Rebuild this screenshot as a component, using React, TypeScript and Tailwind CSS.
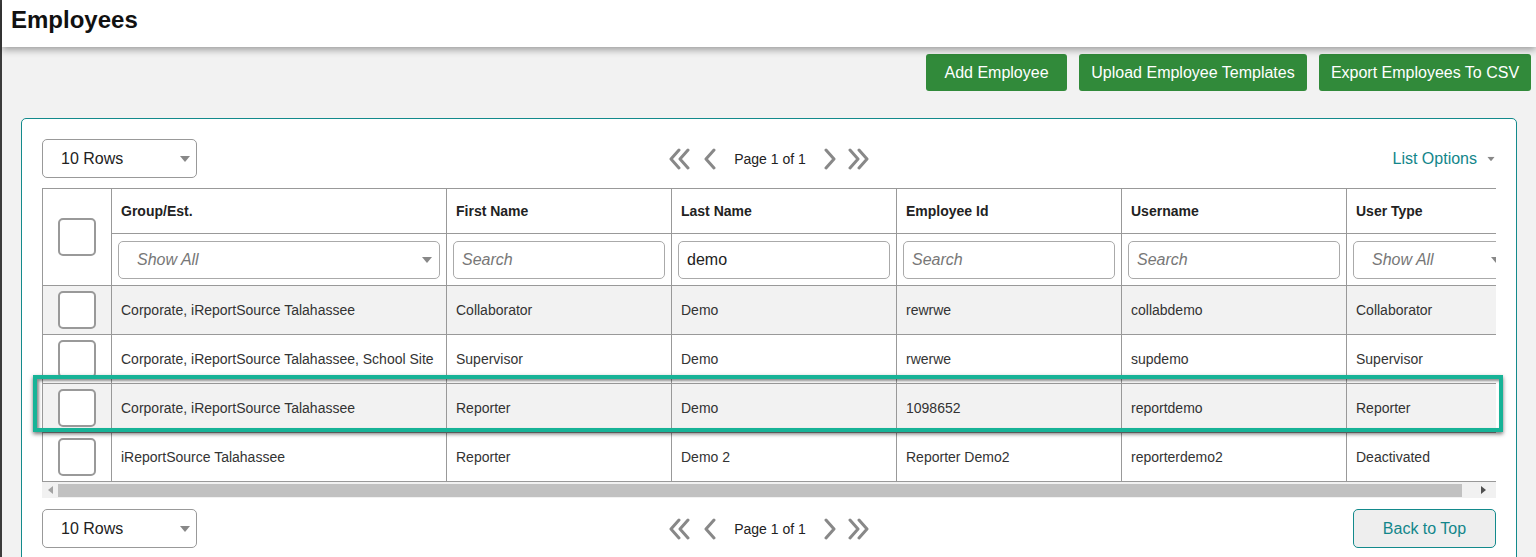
import type { ReactNode } from "react";

type Row = {
  group: string;
  first: string;
  last: string;
  empId: string;
  username: string;
  userType: string;
};

const ROWS: Row[] = [
  {
    group: "Corporate, iReportSource Talahassee",
    first: "Collaborator",
    last: "Demo",
    empId: "rewrwe",
    username: "collabdemo",
    userType: "Collaborator",
  },
  {
    group: "Corporate, iReportSource Talahassee, School Site",
    first: "Supervisor",
    last: "Demo",
    empId: "rwerwe",
    username: "supdemo",
    userType: "Supervisor",
  },
  {
    group: "Corporate, iReportSource Talahassee",
    first: "Reporter",
    last: "Demo",
    empId: "1098652",
    username: "reportdemo",
    userType: "Reporter",
  },
  {
    group: "iReportSource Talahassee",
    first: "Reporter",
    last: "Demo 2",
    empId: "Reporter Demo2",
    username: "reporterdemo2",
    userType: "Deactivated",
  },
];

const ACTIONS = [
  { label: "Add Employee", w: "w-[141px]" },
  { label: "Upload Employee Templates", w: "w-[228px]" },
  { label: "Export Employees To CSV", w: "w-[212px]" },
];

function Caret({ className = "" }: { className?: string }) {
  return (
    <svg width="10" height="6" viewBox="0 0 10 6" className={className}>
      <path d="M0 0h10L5 6z" fill="#888" />
    </svg>
  );
}

function Checkbox() {
  return (
    <div className="mx-auto h-[38px] w-[38px] rounded-[5px] border-2 border-[#999] bg-white" />
  );
}

function RowsSelect() {
  return (
    <div className="flex h-[39px] w-[155px] items-center justify-between rounded-[5px] border border-[#999] bg-white pl-[18px] pr-[6px] text-base text-[#222]">
      <span>10 Rows</span>
      <Caret />
    </div>
  );
}

function Chevron({ dir, double }: { dir: "left" | "right"; double?: boolean }) {
  const single = dir === "left" ? "M12 2 L4 11 L12 20" : "M4 2 L12 11 L4 20";
  return (
    <svg
      width={double ? 24 : 16}
      height="22"
      viewBox={double ? "0 0 24 22" : "0 0 16 22"}
      fill="none"
      stroke="#888"
      strokeWidth="3"
      strokeLinecap="round"
      strokeLinejoin="round"
    >
      {double ? (
        dir === "left" ? (
          <>
            <path d="M11 2 L3 11 L11 20" />
            <path d="M20 2 L12 11 L20 20" />
          </>
        ) : (
          <>
            <path d="M4 2 L12 11 L4 20" />
            <path d="M13 2 L21 11 L13 20" />
          </>
        )
      ) : (
        <path d={single} />
      )}
    </svg>
  );
}

function Pager() {
  return (
    <div className="flex items-center">
      <Chevron dir="left" double />
      <span className="ml-[10px]">
        <Chevron dir="left" />
      </span>
      <span className="mx-[16px] text-sm text-[#222]">Page 1 of 1</span>
      <Chevron dir="right" />
      <span className="ml-[8px]">
        <Chevron dir="right" double />
      </span>
    </div>
  );
}

function Th({ children }: { children: ReactNode }) {
  return (
    <th className="h-[45px] border border-[#999] pl-[9px] text-left align-middle text-sm font-bold text-[#222]">
      {children}
    </th>
  );
}

function SearchBox({ value }: { value?: string }) {
  return (
    <div className="flex h-[38px] items-center rounded-[5px] border border-[#aaa] bg-white px-[8px] text-base">
      {value ? (
        <span className="text-[#222]">{value}</span>
      ) : (
        <span className="italic text-[#777]">Search</span>
      )}
    </div>
  );
}

function ShowAll() {
  return (
    <div className="flex h-[38px] items-center justify-between rounded-[5px] border border-[#aaa] bg-white pl-[18px] pr-[7px] text-base">
      <span className="italic text-[#777]">Show All</span>
      <Caret />
    </div>
  );
}

function FilterTd({ children }: { children: ReactNode }) {
  return <td className="h-[52px] border border-[#999] px-[6px]">{children}</td>;
}

export default function App() {
  return (
    <div
      className="min-h-screen border-l-2 border-[#3c3c3c] bg-[#f2f2f2]"
      style={{ fontFamily: '"Liberation Sans", Arial, sans-serif' }}
    >
      <header className="relative z-10 h-[47px] bg-white pl-[9px] pt-[6px] shadow-[0_3px_7px_rgba(0,0,0,0.35)]">
        <h1 className="text-[24px] font-bold leading-[28px] text-[#111]">Employees</h1>
      </header>

      <div className="flex justify-end gap-[12px] pr-[5px] pt-[7px]">
        {ACTIONS.map((a) => (
          <button
            key={a.label}
            type="button"
            className={`h-[37px] ${a.w} whitespace-nowrap rounded-[3px] bg-[#318a3a] text-base text-white`}
          >
            {a.label}
          </button>
        ))}
      </div>

      <div className="ml-[19px] mt-[27px] w-[1496px] rounded-[5px] border border-[#138a8c] bg-white px-[20px] pb-[20px] pt-[20px]">
        <div className="grid h-[39px] grid-cols-[1fr_auto_1fr] items-center">
          <RowsSelect />
          <Pager />
          <div className="flex items-center justify-end gap-[9px] text-base text-[#12868a]">
            <span>List Options</span>
            <Caret className="scale-75" />
          </div>
        </div>

        <div className="relative mt-[10px]">
          <div className="w-[1454px] overflow-hidden">
            <table className="w-[1473px] table-fixed border-collapse">
              <colgroup>
                <col className="w-[69px]" />
                <col className="w-[335px]" />
                <col className="w-[225px]" />
                <col className="w-[225px]" />
                <col className="w-[225px]" />
                <col className="w-[225px]" />
                <col className="w-[169px]" />
              </colgroup>
              <thead className="bg-white">
                <tr>
                  <th rowSpan={2} className="border border-[#999] align-middle">
                    <Checkbox />
                  </th>
                  <Th>Group/Est.</Th>
                  <Th>First Name</Th>
                  <Th>Last Name</Th>
                  <Th>Employee Id</Th>
                  <Th>Username</Th>
                  <Th>User Type</Th>
                </tr>
                <tr>
                  <FilterTd>
                    <ShowAll />
                  </FilterTd>
                  <FilterTd>
                    <SearchBox />
                  </FilterTd>
                  <FilterTd>
                    <SearchBox value="demo" />
                  </FilterTd>
                  <FilterTd>
                    <SearchBox />
                  </FilterTd>
                  <FilterTd>
                    <SearchBox />
                  </FilterTd>
                  <FilterTd>
                    <ShowAll />
                  </FilterTd>
                </tr>
              </thead>
              <tbody>
                {ROWS.map((r, i) => (
                  <tr key={i} className={i % 2 === 0 ? "bg-[#f2f2f2]" : "bg-white"}>
                    <td className="h-[49px] border border-[#999]">
                      <Checkbox />
                    </td>
                    {[r.group, r.first, r.last, r.empId, r.username, r.userType].map((v, j) => (
                      <td
                        key={j}
                        className="whitespace-nowrap border border-[#999] pl-[9px] text-sm text-[#333]"
                      >
                        {v}
                      </td>
                    ))}
                  </tr>
                ))}
              </tbody>
            </table>
          </div>

          {/* horizontal scrollbar */}
          <div className="flex h-[16px] w-[1454px] items-center bg-[#f1f1f1]">
            <div className="flex w-[16px] justify-center">
              <svg width="5" height="8" viewBox="0 0 5 8">
                <path d="M5 0v8L0 4z" fill="#a3a3a3" />
              </svg>
            </div>
            <div className="h-[13px] w-[1404px] bg-[#c1c1c1]" />
            <div className="flex flex-1 justify-center pl-[8px]">
              <svg width="5" height="8" viewBox="0 0 5 8">
                <path d="M0 0v8l5-4z" fill="#505050" />
              </svg>
            </div>
          </div>

          {/* focused row outline */}
          <div className="pointer-events-none absolute left-[-9px] top-[187px] h-[57px] w-[1470px] border-4 border-[#17b397] shadow-[0_2px_4px_rgba(0,0,0,0.55),inset_2px_2px_3px_rgba(0,0,0,0.45)]" />
        </div>

        <div className="mt-[11px] grid h-[39px] grid-cols-[1fr_auto_1fr] items-center">
          <RowsSelect />
          <Pager />
          <div className="flex justify-end">
            <button
              type="button"
              className="h-[39px] w-[143px] rounded-[5px] border border-[#138a8c] bg-[#eeeeee] text-base text-[#12868a]"
            >
              Back to Top
            </button>
          </div>
        </div>
      </div>
    </div>
  );
}
